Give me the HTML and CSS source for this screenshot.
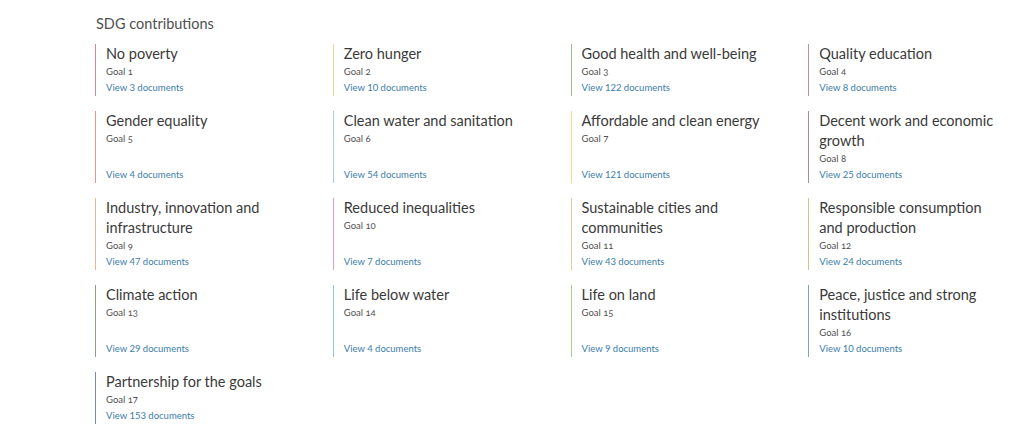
FILE: index.html
```html
<!DOCTYPE html>
<html lang="en">
<head>
    <meta charset="UTF-8">
    <meta name="viewport" content="width=device-width, initial-scale=1.0">
    <title>SDG contributions</title>
    <link rel="stylesheet" href="styles.css">
</head>
<body>
    <section class="sdg-section">
        <h2 class="sdg-heading">SDG contributions</h2>

        <div class="sdg-grid">
            <div class="sdg-item goal-1">
                <div class="sdg-title">No poverty</div>
                <div class="sdg-goal">Goal 1</div>
                <a class="sdg-link" href="#">View 3 documents</a>
            </div>
            <div class="sdg-item goal-2">
                <div class="sdg-title">Zero hunger</div>
                <div class="sdg-goal">Goal 2</div>
                <a class="sdg-link" href="#">View 10 documents</a>
            </div>
            <div class="sdg-item goal-3">
                <div class="sdg-title">Good health and well-being</div>
                <div class="sdg-goal">Goal 3</div>
                <a class="sdg-link" href="#">View 122 documents</a>
            </div>
            <div class="sdg-item goal-4">
                <div class="sdg-title">Quality education</div>
                <div class="sdg-goal">Goal 4</div>
                <a class="sdg-link" href="#">View 8 documents</a>
            </div>

            <div class="sdg-item goal-5">
                <div class="sdg-title">Gender equality</div>
                <div class="sdg-goal">Goal 5</div>
                <a class="sdg-link" href="#">View 4 documents</a>
            </div>
            <div class="sdg-item goal-6">
                <div class="sdg-title">Clean water and sanitation</div>
                <div class="sdg-goal">Goal 6</div>
                <a class="sdg-link" href="#">View 54 documents</a>
            </div>
            <div class="sdg-item goal-7">
                <div class="sdg-title">Affordable and clean energy</div>
                <div class="sdg-goal">Goal 7</div>
                <a class="sdg-link" href="#">View 121 documents</a>
            </div>
            <div class="sdg-item goal-8">
                <div class="sdg-title">Decent work and economic growth</div>
                <div class="sdg-goal">Goal 8</div>
                <a class="sdg-link" href="#">View 25 documents</a>
            </div>

            <div class="sdg-item goal-9">
                <div class="sdg-title">Industry, innovation and infrastructure</div>
                <div class="sdg-goal">Goal 9</div>
                <a class="sdg-link" href="#">View 47 documents</a>
            </div>
            <div class="sdg-item goal-10">
                <div class="sdg-title">Reduced inequalities</div>
                <div class="sdg-goal">Goal 10</div>
                <a class="sdg-link" href="#">View 7 documents</a>
            </div>
            <div class="sdg-item goal-11">
                <div class="sdg-title">Sustainable cities and communities</div>
                <div class="sdg-goal">Goal 11</div>
                <a class="sdg-link" href="#">View 43 documents</a>
            </div>
            <div class="sdg-item goal-12">
                <div class="sdg-title">Responsible consumption and production</div>
                <div class="sdg-goal">Goal 12</div>
                <a class="sdg-link" href="#">View 24 documents</a>
            </div>

            <div class="sdg-item goal-13">
                <div class="sdg-title">Climate action</div>
                <div class="sdg-goal">Goal 13</div>
                <a class="sdg-link" href="#">View 29 documents</a>
            </div>
            <div class="sdg-item goal-14">
                <div class="sdg-title">Life below water</div>
                <div class="sdg-goal">Goal 14</div>
                <a class="sdg-link" href="#">View 4 documents</a>
            </div>
            <div class="sdg-item goal-15">
                <div class="sdg-title">Life on land</div>
                <div class="sdg-goal">Goal 15</div>
                <a class="sdg-link" href="#">View 9 documents</a>
            </div>
            <div class="sdg-item goal-16">
                <div class="sdg-title">Peace, justice and strong institutions</div>
                <div class="sdg-goal">Goal 16</div>
                <a class="sdg-link" href="#">View 10 documents</a>
            </div>

            <div class="sdg-item goal-17">
                <div class="sdg-title">Partnership for the goals</div>
                <div class="sdg-goal">Goal 17</div>
                <a class="sdg-link" href="#">View 153 documents</a>
            </div>
        </div>
    </section>
</body>
</html>
```

FILE: styles.css
```css
body {
    margin: 0;
    background: #fff;
    font-family: Lato, "Open Sans", sans-serif;
    color: #333;
}

.sdg-section {
    padding: 14px 16px 0 95px;
}

.sdg-heading {
    margin: 0 0 10px 1px;
    font-size: 14.5px;
    font-weight: normal;
    line-height: 20px;
    color: #505050;
}

.sdg-grid {
    display: grid;
    grid-template-columns: repeat(4, 1fr);
    column-gap: 38px;
    row-gap: 15px;
}

/* каждый блок цели: цветная линия слева, ссылка прижата книзу */
.sdg-item {
    display: flex;
    flex-direction: column;
    padding-left: 10px;
    border-left: 1px solid #ccc;
}

.sdg-title {
    font-size: 14.5px;
    line-height: 20px;
    color: #3a3a3a;
}

.sdg-goal {
    font-size: 9.5px;
    line-height: 16px;
    color: #505050;
    font-variant-numeric: oldstyle-nums;
}

.sdg-link {
    margin-top: auto;
    font-size: 9.5px;
    line-height: 16px;
    color: #3b7dab;
    text-decoration: none;
}

.sdg-link:hover {
    text-decoration: underline;
}

.goal-1 { border-color: #d98690; }
.goal-2 { border-color: #e3d1a0; }
.goal-3 { border-color: #97bb95; }
.goal-4 { border-color: #c78d96; }
.goal-5 { border-color: #e5978f; }
.goal-6 { border-color: #a0cee0; }
.goal-7 { border-color: #f1d98a; }
.goal-8 { border-color: #b08697; }
.goal-9 { border-color: #eeb28c; }
.goal-10 { border-color: #dca0c3; }
.goal-11 { border-color: #f0c293; }
.goal-12 { border-color: #d5bf95; }
.goal-13 { border-color: #85a187; }
.goal-14 { border-color: #96c7df; }
.goal-15 { border-color: #a4d095; }
.goal-16 { border-color: #85a3b8; }
.goal-17 { border-color: #798ea4; }
```
